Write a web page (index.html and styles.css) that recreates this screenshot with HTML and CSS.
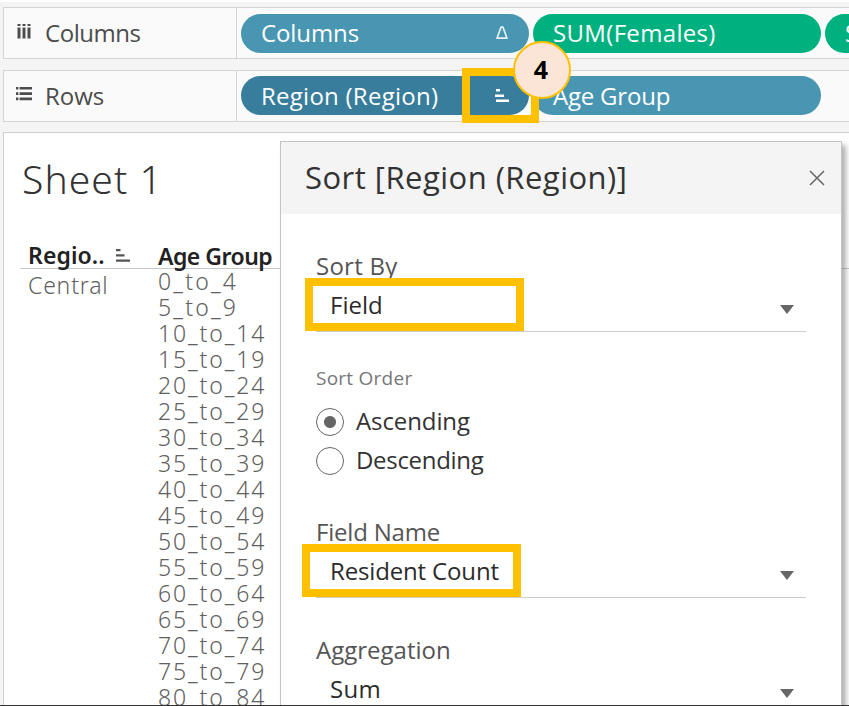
FILE: index.html
```html
<!DOCTYPE html>
<html lang="en">
<head>
<meta charset="utf-8">
<title>Sheet 1</title>
<link rel="stylesheet" href="styles.css">
</head>
<body>
<div class="app">
  <div class="shelf">
    <div class="shelf-label">
      <svg class="shelf-icon" width="18" height="18" viewBox="0 0 18 18" fill="#4c4c4c"><path d="M1.500 2h3v2h-3zM6.500 2h3v2h-3zM11.500 2h3v2h-3zM1.500 5.500h3v11h-3zM6.500 5.500h3v11h-3zM11.500 5.500h3v11h-3z"/></svg>
      <span class="t-columns">Columns</span>
    </div>
    <div class="pills">
      <div class="pill blue"><span class="t-pcol">Columns</span>
        <svg class="delta" width="14" height="16" viewBox="0 0 14 16"><path d="M6.1 2h1.800L12 13.200H2z" fill="none" stroke="#e6f1f5" stroke-width="1.700" stroke-linejoin="round"/></svg>
      </div>
      <div class="pill green"><span class="t-sum">SUM(Females)</span></div>
      <div class="pill green"><span>SUM(Males)</span></div>
    </div>
  </div>
  <div class="shelf">
    <div class="shelf-label">
      <svg class="shelf-icon" width="18" height="18" viewBox="0 0 18 18" fill="#4c4c4c"><path d="M0 3h2.400v2.600H0zM3.600 3h12.400v2.600H3.600zM0 8.300h2.400v2.600H0zM3.600 8.300h12.400v2.600H3.600zM0 13.600h2.400v2.600H0zM3.600 13.600h12.400v2.600H3.600z"/></svg>
      <span class="t-rows">Rows</span>
    </div>
    <div class="pills">
      <div class="pill dark"><span class="t-region">Region (Region)</span>
        <svg class="sort" width="14" height="14" viewBox="0 0 14 14" fill="#fff"><path d="M1 0h4v2.500H1zM0 5.400h9v2.600H0zM1 10.500h13V13H1z"/></svg>
      </div>
      <div class="pill blue"><span class="t-age">Age Group</span></div>
    </div>
    <div class="callout-box sort-box"></div>
    <div class="callout-number">4</div>
  </div>
  <div class="sheet">
    <h1 class="sheet-title">Sheet 1</h1>
    <div class="table-head">
      <div class="head-region"><span>Regio..</span>
        <svg width="14" height="14" viewBox="0 0 14 14" fill="#555"><path d="M0 0h4.500v2.300H0zM0 5.300h8.500v2.300H0zM0 10.500h14v2.300H0z"/></svg>
      </div>
      <div class="head-age">Age Group</div>
    </div>
    <div class="table-body">
      <div class="body-region">Central</div>
      <ul class="ages">
        <li class="short">0_to_4</li><li class="short">5_to_9</li><li>10_to_14</li><li>15_to_19</li><li>20_to_24</li><li>25_to_29</li><li>30_to_34</li><li>35_to_39</li><li>40_to_44</li><li>45_to_49</li><li>50_to_54</li><li>55_to_59</li><li>60_to_64</li><li>65_to_69</li><li>70_to_74</li><li>75_to_79</li><li>80_to_84</li>
      </ul>
    </div>
  </div>
  <div class="dialog">
    <div class="dialog-head">
      <h2>Sort [Region (Region)]</h2>
      <svg width="16" height="16" viewBox="0 0 16 16"><path d="M1 1l14 14M15 1L1 15" stroke="#666" stroke-width="1.500"/></svg>
    </div>
    <div class="dialog-body">
      <div class="field">
        <div class="label t-sortby">Sort By</div>
        <div class="select"><span class="t-field">Field</span><i class="arrow"></i>
          <div class="callout-box field-box"></div></div>
      </div>
      <div class="order">
        <div class="order-label">Sort Order</div>
        <div class="radio"><i class="dot on"></i><span class="t-asc">Ascending</span></div>
        <div class="radio"><i class="dot"></i><span class="t-desc">Descending</span></div>
      </div>
      <div class="field">
        <div class="label t-fname">Field Name</div>
        <div class="select"><span class="t-count">Resident Count</span><i class="arrow"></i>
          <div class="callout-box name-box"></div></div>
      </div>
      <div class="field agg">
        <div class="label t-agg">Aggregation</div>
        <div class="select"><span class="t-sumv">Sum</span><i class="arrow"></i></div>
      </div>
    </div>
  </div>
  <div class="bottom-line"></div>
</div>
</body>
</html>
```
FILE: styles.css
```css
* { box-sizing: border-box; }
body { margin: 0; overflow: hidden; }
.app {
  position: relative;
  width: 849px;
  height: 706px;
  overflow: hidden;
  border-top: 2px solid #fff;
  background: #f4f4f4;
  padding: 5px 0 0 3px;
  font-family: "Open Sans", "Noto Sans", sans-serif;
  font-size: 24px;
  color: #333;
}
.app span { white-space: nowrap; }
.shelf {
  position: relative;
  display: flex;
  width: 900px;
  height: 52px;
  margin-bottom: 10.500px;
  border: 1.500px solid #d4d4d4;
  background: #fafafa;
}
.shelf-label {
  display: flex;
  align-items: center;
  flex: none;
  width: 233px;
  padding-left: 12px;
  border-right: 1px solid #d4d4d4;
  color: #4c4c4c;
}
.shelf-label span, .pill span { padding-bottom: 1px; }
.shelf-icon { margin: -5px 11px 0 0; }
.pills { display: flex; align-items: center; gap: 4px; padding-left: 4px; }
.pill {
  display: flex;
  align-items: center;
  justify-content: space-between;
  flex: none;
  width: 288px;
  height: 39px;
  padding: 0 20px;
  border-radius: 20px;
  color: #fff;
}
.blue { background: #4996b2; }
.dark { background: #387d9b; }
.green { background: #00b180; }
.t-columns { letter-spacing: -.45px; }
.t-pcol { letter-spacing: -.1px; }
.t-region, .t-sum { letter-spacing: .25px; }
.t-sum { letter-spacing: .33px; }
.t-age { letter-spacing: -.2px; }

.callout-box { position: absolute; border: 8px solid #ffc000; }
.sort-box { left: 458px; top: -3px; width: 77px; height: 55px; }
.callout-number {
  position: absolute;
  left: 509px;
  top: -30px;
  width: 58px;
  height: 58px;
  border: 2.500px solid #ffc000;
  border-radius: 50%;
  background: #fbe5d6;
  color: #000;
  font: 700 25px/52px "Open Sans", sans-serif;
  text-align: center;
  padding-right: 2px;
}

.sheet {
  width: 900px;
  height: 600px;
  border: 1px solid #d0d0d0;
  background: #fff;
  padding-left: 16px;
  font-family: "Noto Sans", "Open Sans", sans-serif;
}
.sheet-title {
  margin: 21px 0 0 2px;
  height: 51px;
  font-size: 39px;
  font-weight: 300;
  line-height: 50px;
  letter-spacing: 1.100px;
}
.table-head {
  display: flex;
  height: 30px;
  margin-top: 34px;
  padding-left: 8px;
  border-bottom: 1.500px solid #c8c8c8;
  font-size: 23px;
  font-weight: 600;
  line-height: 30px;
  color: #222;
  padding-top: 1px;
}
.head-region { display: flex; align-items: center; width: 130px; gap: 11px; padding-top: 2px; letter-spacing: .1px; }
.head-region svg { margin-bottom: -1px; }
.head-age { letter-spacing: -.5px; padding-top: 1px; }
.table-body { display: flex; padding-left: 8px; font-size: 23px; font-weight: 300; color: #606060; }
.body-region { width: 130px; line-height: 33px; letter-spacing: .8px; }
.ages { margin: -1px 0 0; padding: 0; list-style: none; line-height: 26px; letter-spacing: 1.900px; }
.short { letter-spacing: 2.200px; }

.dialog {
  position: absolute;
  left: 280px;
  top: 139px;
  width: 562px;
  height: 600px;
  border: 1px solid #c4c4c4;
  background: #fff;
  box-shadow: 4px 4px 5px rgba(0, 0, 0, .3);
}
.dialog-head {
  display: flex;
  align-items: center;
  justify-content: space-between;
  height: 72px;
  padding: 0 16px 0 24px;
  background: #f4f4f4;
}
h2 {
  margin: 0;
  padding-bottom: 2px;
  font-size: 31px;
  font-weight: 400;
  line-height: 40px;
  letter-spacing: .48px;
  white-space: nowrap;
}
.dialog-body { padding: 38px 35px 0; }
.label { height: 30px; line-height: 28px; color: #555; }
.t-sortby { letter-spacing: .25px; }
.t-fname { letter-spacing: -.2px; }
.select {
  position: relative;
  display: flex;
  justify-content: space-between;
  height: 50px;
  padding: 0 12px 0 14px;
  border-bottom: 1px solid #ccc;
  line-height: 46px;
  color: #2b2b2b;
}
.t-count { letter-spacing: -.15px; }
.t-sumv { letter-spacing: .3px; }
.arrow {
  width: 0;
  height: 0;
  margin-top: 23px;
  border: 7px solid transparent;
  border-top: 9px solid #666;
  border-bottom: 0;
}
.field-box { left: -11px; top: -4px; width: 219px; height: 53px; }
.name-box { left: -14px; top: -4px; width: 219px; height: 53px; }
.order { padding-top: 32px; height: 186px; }
.order-label { height: 30px; margin-bottom: 8px; font-size: 19px; line-height: 28px; letter-spacing: .25px; color: #777; }
.radio { display: flex; align-items: center; height: 39px; gap: 12px; }
.radio span { padding-bottom: 3px; }
.t-asc { letter-spacing: -.1px; }
.t-desc { letter-spacing: -.3px; }
.dot { flex: none; width: 28px; height: 28px; border: 1.500px solid #666; border-radius: 50%; }
.on { background: radial-gradient(circle, #666 5.500px, transparent 6.500px); }
.agg { padding-top: 38px; }
.bottom-line { position: absolute; left: 0; right: 0; bottom: 0; height: 1px; background: #333; }
```
